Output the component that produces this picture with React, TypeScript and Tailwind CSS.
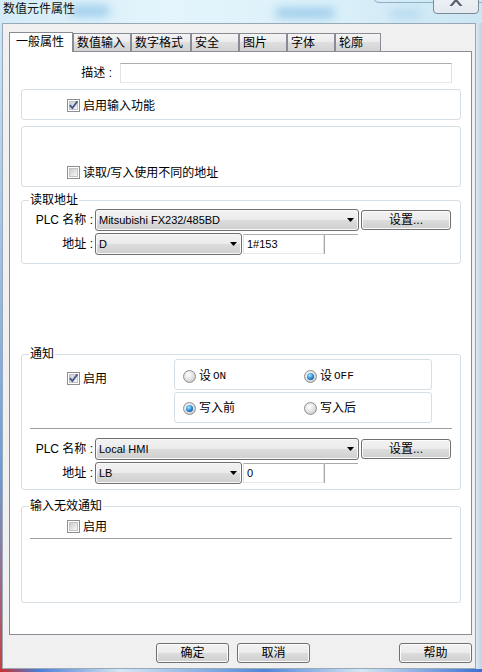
import React from "react";

const btnBg = "bg-[linear-gradient(#f2f2f2,#ebebeb_50%,#dddddd_50%,#cfcfcf)]";

function CheckBox({ checked }: { checked?: boolean }) {
  return (
    <span className="flex h-[13px] w-[13px] shrink-0 items-center justify-center border border-[#8e8f8f] bg-white">
      <span className="flex h-[9px] w-[9px] items-center justify-center border border-[#c4c4c4] bg-[linear-gradient(135deg,#cdcdcd,#f7f7f7)]">
        {checked && (
          <svg width="9" height="9" viewBox="0 0 9 9" className="overflow-visible">
            <path d="M0.8 4.2 L3.4 7 L8.4 0.2" fill="none" stroke="#45598f" strokeWidth="1.9" />
          </svg>
        )}
      </span>
    </span>
  );
}

function Radio({ checked }: { checked?: boolean }) {
  return (
    <span className="flex h-[13px] w-[13px] shrink-0 items-center justify-center rounded-full border border-[#8e8f8f] bg-[radial-gradient(circle_at_40%_35%,#ffffff,#dedede_55%,#bcbcbc)]">
      {checked && (
        <span className="h-[7px] w-[7px] rounded-full bg-[radial-gradient(circle_at_40%_35%,#a8ecff,#2b8ad6_50%,#0c3b6e)]" />
      )}
    </span>
  );
}

function Combo({ text, className }: { text: string; className: string }) {
  return (
    <div
      className={`flex h-[22px] items-center justify-between rounded-[3px] border border-[#707070] ${btnBg} pl-[3px] pr-[4px] shadow-[inset_0_0_0_1px_#f8f8f8] ${className}`}
    >
      <span className="text-[11px] leading-none">{text}</span>
      <svg width="7" height="4" viewBox="0 0 7 4">
        <path d="M0 0H7L3.5 4Z" fill="#000" />
      </svg>
    </div>
  );
}

function Btn({ children, className }: { children: React.ReactNode; className: string }) {
  return (
    <div
      className={`flex items-center justify-center rounded-[3px] border border-[#707070] ${btnBg} shadow-[inset_0_0_0_1px_#fbfbfb] text-[12px] leading-none ${className}`}
    >
      {children}
    </div>
  );
}

function Group({
  title,
  className,
  children,
}: {
  title?: string;
  className: string;
  children?: React.ReactNode;
}) {
  return (
    <div className={`relative ml-[11px] w-[440px] shrink-0 rounded-[3px] border border-[#d5dfe5] ${className}`}>
      {title && (
        <span className="absolute -top-[8px] left-[7px] bg-white px-[1px] text-[12px] leading-[14px]">{title}</span>
      )}
      {children}
    </div>
  );
}

function TextBox({ text, className }: { text: string; className: string }) {
  return (
    <div
      className={`flex h-[20px] items-center border border-[#abadb3] border-b-[#e3e9ef] border-l-[#e2e3ea] border-r-[#dbdfe6] bg-white pl-[3px] text-[11px] ${className}`}
    >
      {text}
    </div>
  );
}

function PlcRows({ plc, dev, addr, gapClass }: { plc: string; dev: string; addr: string; gapClass: string }) {
  return (
    <>
      <div className="flex items-center">
        <span className="w-[71px] text-right leading-none">PLC 名称 :</span>
        <Combo className="ml-[2px] w-[264px]" text={plc} />
        <Btn className="ml-[2px] h-[20px] w-[90px]">设置...</Btn>
      </div>
      <div className={`flex items-center ${gapClass}`}>
        <span className="w-[71px] text-right leading-none">地址 :</span>
        <Combo className="ml-[2px] w-[147px]" text={dev} />
        <TextBox className="ml-[1px] w-[81px]" text={addr} />
        <div className="h-[20px] w-[34px] border-l border-t border-[#a9a9a9]" />
      </div>
    </>
  );
}

const tabs: { label: string; w: string }[] = [
  { label: "一般属性", w: "w-[64px]" },
  { label: "数值输入", w: "w-[58px]" },
  { label: "数字格式", w: "w-[60px]" },
  { label: "安全", w: "w-[48px]" },
  { label: "图片", w: "w-[48px]" },
  { label: "字体", w: "w-[48px]" },
  { label: "轮廓", w: "w-[46px]" },
];

export default function App() {
  return (
    <div className="flex h-[672px] w-[482px] flex-col overflow-hidden bg-[#cfe4f2] font-['Liberation_Sans','Noto_Sans_CJK_SC',sans-serif] text-[12px] text-black">
      {/* title bar */}
      <div className="relative h-[23px] shrink-0 overflow-hidden bg-[linear-gradient(90deg,#d3ecf8,#e4f5fc_35%,#dcf1fa_65%,#cbe6f4)]">
        <div className="absolute left-[70px] top-[6px] h-[10px] w-[40px] rounded-full bg-[#9ccbeb] blur-[5px]" />
        <div className="absolute left-[275px] top-[8px] h-[10px] w-[60px] rounded-full bg-[#9ccbeb] blur-[5px]" />
        <div className="absolute left-[390px] top-[10px] h-[8px] w-[30px] rounded-full bg-[#b3d8ef] blur-[5px]" />
        <span className="relative block pl-[3px] pt-[2px] text-[12px] leading-[14px] text-[#111]">数值元件属性</span>
        <div className="absolute left-[373px] top-[-10px] h-[13px] w-[120px] rounded-bl-[6px] border border-[#8fb0c8]" />
        <div className="absolute left-[433px] top-[-14px] flex h-[28px] w-[46px] items-center justify-center rounded-b-[4px] border border-[#7d8b99] bg-[linear-gradient(#f4f7f9,#e3e9ee)]">
          <svg width="16" height="12" viewBox="0 0 16 12">
            <path d="M2 -1 L8 6 L14 -1 M2 13 L8 6 L14 13" fill="none" stroke="#58626c" strokeWidth="2.2" />
          </svg>
        </div>
      </div>

      <div className="flex h-[646px] shrink-0">
        <div className="w-[2px] bg-[linear-gradient(#cfe6f5,#6d9bd8_70%,#c84040)]" />
        <div className="flex w-[474px] flex-col border border-[#9aa9b8] bg-[#f0f0f0]">
          {/* tabs */}
          <div className="relative z-10 -mb-[1px] flex h-[28px] items-end pl-[6px] pt-[8px]">
            {tabs.map((t, i) =>
              i === 0 ? (
                <div
                  key={t.label}
                  className={`flex h-[20px] ${t.w} items-center border-l border-r border-t border-[#898c95] bg-white pl-[6px] pb-[1px] text-[12px] leading-none`}
                >
                  {t.label}
                </div>
              ) : (
                <div
                  key={t.label}
                  className={`flex h-[19px] ${t.w} items-center border border-[#898c95] bg-[linear-gradient(#f4f4f4,#ebebeb_50%,#dedede_50%,#d3d3d3)] pl-[3px] text-[12px] leading-none`}
                >
                  {t.label}
                </div>
              )
            )}
          </div>

          {/* panel */}
          <div className="ml-[6px] flex h-[584px] w-[463px] flex-col border border-[#898c95] bg-white">
            <div className="mt-[12px] flex h-[18px] items-center">
              <span className="w-[102px] text-right leading-none">描述 :</span>
              <TextBox className="ml-[8px] h-[18px] w-[332px]" text="" />
            </div>

            <Group className="mt-[7px] h-[31px] pl-[45px] pt-[9px]">
              <div className="flex h-[13px] items-center">
                <CheckBox checked />
                <span className="ml-[3px] leading-none">启用输入功能</span>
              </div>
            </Group>

            <Group className="mt-[6px] h-[61px] pl-[45px] pt-[39px]">
              <div className="flex h-[13px] items-center">
                <CheckBox />
                <span className="ml-[3px] leading-none">读取/写入使用不同的地址</span>
              </div>
            </Group>

            <Group title="读取地址" className="mt-[13px] h-[64px] pt-[8px]">
              <PlcRows plc="Mitsubishi FX232/485BD" dev="D" addr="1#153" gapClass="mt-[2px]" />
            </Group>

            <Group title="通知" className="mt-[90px] h-[136px] pt-[4px]">
              <div className="flex">
                <div className="w-[152px] pl-[45px] pt-[13px]">
                  <div className="flex h-[13px] items-center">
                    <CheckBox checked />
                    <span className="ml-[3px] leading-none">启用</span>
                  </div>
                </div>
                <div className="flex flex-col">
                  <div className="flex h-[31px] w-[258px] items-center rounded-[3px] border border-[#d5dfe5] pl-[8px] pt-[3px]">
                    <div className="flex w-[121px] items-center">
                      <Radio />
                      <span className="ml-[3px] leading-none">设 </span>
                      <span className="ml-[2px] font-['Liberation_Mono',monospace] text-[11px] leading-none">ON</span>
                    </div>
                    <div className="flex items-center">
                      <Radio checked />
                      <span className="ml-[3px] leading-none">设 </span>
                      <span className="ml-[2px] font-['Liberation_Mono',monospace] text-[11px] leading-none">OFF</span>
                    </div>
                  </div>
                  <div className="mt-[2px] flex h-[31px] w-[258px] items-center rounded-[3px] border border-[#d5dfe5] pl-[8px] pt-[1px]">
                    <div className="flex w-[121px] items-center">
                      <Radio checked />
                      <span className="ml-[3px] leading-none">写入前</span>
                    </div>
                    <div className="flex items-center">
                      <Radio />
                      <span className="ml-[3px] leading-none">写入后</span>
                    </div>
                  </div>
                </div>
              </div>
              <div className="ml-[8px] mt-[5px] h-[2px] w-[422px] border-t border-[#a0a0a0] border-b-white" />
              <div className="mt-[8px]">
                <PlcRows plc="Local HMI" dev="LB" addr="0" gapClass="mt-[2px]" />
              </div>
            </Group>

            <Group title="输入无效通知" className="mt-[16px] h-[97px] pt-[13px]">
              <div className="flex h-[13px] items-center pl-[45px]">
                <CheckBox />
                <span className="ml-[3px] leading-none">启用</span>
              </div>
              <div className="ml-[8px] mt-[5px] h-[2px] w-[422px] border-t border-[#a0a0a0]" />
            </Group>
          </div>

          {/* bottom buttons */}
          <div className="mt-[8px] flex pr-[3px]">
            <Btn className="ml-[153px] h-[20px] w-[73px]">确定</Btn>
            <Btn className="ml-[8px] h-[20px] w-[73px]">取消</Btn>
            <Btn className="ml-auto h-[20px] w-[73px]">帮助</Btn>
          </div>
        </div>
        <div className="w-[6px] bg-[linear-gradient(90deg,#dbe9f3,#bcd3e6)]" />
      </div>
      <div className="h-[3px] shrink-0 bg-[linear-gradient(90deg,#c83030,#4b7fd6_8%,#d5e7f4_25%,#4f86d8_55%,#d5e7f4_75%,#3a6fcf)]" />
    </div>
  );
}
